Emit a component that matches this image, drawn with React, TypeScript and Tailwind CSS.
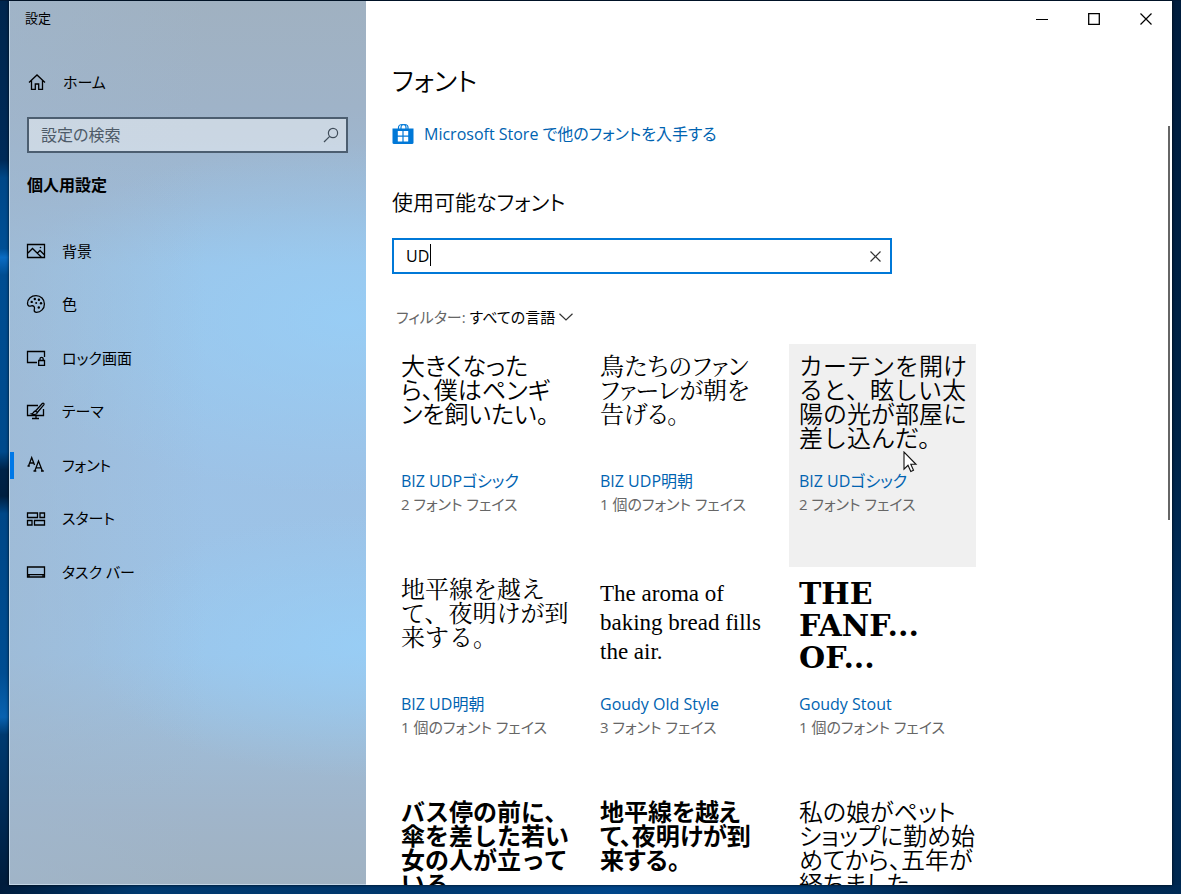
import React, { useState } from "react"
import clsx from "clsx"

interface NavItem {
  label: string
  icon: React.ReactNode
  current?: boolean
}

interface FontEntry {
  name: string
  faces: string
  sample: string
  preview: string
  hovered?: boolean
}

const Icon = ({ children }: { children: React.ReactNode }) => (
  <svg
    width="20"
    height="20"
    viewBox="0 0 20 20"
    fill="none"
    stroke="currentColor"
    strokeWidth="1.3"
    className="shrink-0"
    aria-hidden="true">
    {children}
  </svg>
)

const HomeIcon = () => (
  <Icon>
    <path d="M2 10.500 10 3l8 7.500M4.500 8.500v8.800h3.800V12h3.400v5.300h3.800V8.500" />
  </Icon>
)

const navItems: NavItem[] = [
  {
    label: "背景",
    icon: (
      <Icon>
        <path d="M1.500 3.500h17v13h-17zM2 12l4.500-4.500 9 8.800M11.500 12l2.500-2.500 4.500 4.500" />
        <circle cx="14.500" cy="6.500" r=".8" fill="currentColor" stroke="none" />
      </Icon>
    )
  },
  {
    label: "色",
    icon: (
      <Icon>
        <path d="M1.500 9.500C1.700 4.800 5.300 1.700 10 1.700c4.800 0 8.400 3.500 8.400 8.200 0 4.800-3.500 8.400-7.900 8.400-1.600 0-2.300-.8-2.300-2 0-1.300.7-2 .1-3.400-.5-1.200-1.700-1.300-3-1-1.900.5-3.800.1-3.800-2.400z" />
        <g fill="currentColor" stroke="none">
          <circle cx="5.700" cy="7.900" r="1.200" />
          <circle cx="8.800" cy="5" r="1.200" />
          <circle cx="12.900" cy="5.700" r="1.200" />
          <circle cx="15" cy="9.300" r="1.200" />
          <circle cx="12.800" cy="13.500" r="1.200" />
          <circle cx="10.200" cy="9" r="1" />
        </g>
      </Icon>
    )
  },
  {
    label: "ロック画面",
    icon: (
      <Icon>
        <path d="M11 14.500H1.500v-11h17V9M12.700 12.500h5.800v4.800h-5.800zM14 12.500v-1.700c0-2 3.200-2 3.200 0v1.700" />
      </Icon>
    )
  },
  {
    label: "テーマ",
    icon: (
      <Icon>
        <path d="M12 4.500H1.500v10h16V8M10 14.500v3M6 17.500h7" />
        <path d="M9.500 10 16.300 2.500c1-.9 2.300.3 1.500 1.300L11.300 11.500zM9.500 10c-2.300.2-1.500 2.400-4 3 2 .9 5.600.8 5.800-1.500" />
      </Icon>
    )
  },
  {
    label: "フォント",
    current: true,
    icon: (
      <Icon>
        <path d="m2.500 11 3.200-8.500L8.500 10M3.500 8h4.300M8.800 16l3.700-10 3.900 10M10.200 12.800h4.800M1.500 11h2.300M7.500 16h2.800M15 16h2.800" />
      </Icon>
    )
  },
  {
    label: "スタート",
    icon: (
      <Icon>
        <path d="M1.500 4h10v4.500h-10zM14 4h4.500v4.500H14zM1.500 11.500H6V16H1.500zM8.500 11.500h10V16h-10z" />
      </Icon>
    )
  },
  {
    label: "タスク バー",
    icon: (
      <Icon>
        <path d="M1.500 5h17v10h-17zM2 12.700h16M3 12.500V15M17 12.500V15" />
      </Icon>
    )
  }
]

// fixed pitch samples turn the proportional kana of the page off again
const gothic =
  "text-2xl leading-6 font-['Noto_Sans_CJK_JP',sans-serif] font-[350] [font-feature-settings:normal]"
const gothicP = "text-2xl leading-6 font-['Noto_Sans_CJK_JP',sans-serif] font-[350]"
const gothicBold =
  "text-2xl leading-6 font-['Noto_Sans_CJK_JP',sans-serif] font-bold [font-feature-settings:normal]"
const mincho =
  "text-2xl leading-6 font-['Noto_Serif_CJK_JP','Noto_Sans_CJK_JP',serif] [font-feature-settings:normal]"
const minchoP = "text-2xl leading-6 font-['Noto_Serif_CJK_JP','Noto_Sans_CJK_JP',serif]"

const fonts: FontEntry[] = [
  {
    name: "BIZ UDPゴシック",
    faces: "2 フォント フェイス",
    sample: "大きくなった\nら、僕はペンギ\nンを飼いたい。",
    preview: gothicP
  },
  {
    name: "BIZ UDP明朝",
    faces: "1 個のフォント フェイス",
    sample: "鳥たちのファン\nファーレが朝を\n告げる。",
    preview: minchoP
  },
  {
    name: "BIZ UDゴシック",
    faces: "2 フォント フェイス",
    sample: "カーテンを開け\nると、眩しい太\n陽の光が部屋に\n差し込んだ。",
    preview: gothic,
    hovered: true
  },
  {
    name: "BIZ UD明朝",
    faces: "1 個のフォント フェイス",
    sample: "地平線を越え\nて、夜明けが到\n来する。",
    preview: mincho
  },
  {
    name: "Goudy Old Style",
    faces: "3 フォント フェイス",
    sample: "The aroma of\nbaking bread fills\nthe air.",
    preview: "pt-[3px] text-[23px] leading-[29px] font-['Liberation_Serif',serif]"
  },
  {
    name: "Goudy Stout",
    faces: "1 個のフォント フェイス",
    sample: "THE\nFANF...\nOF...",
    preview: "pt-[2px] text-3xl leading-8 font-black font-['DejaVu_Serif',serif]"
  },
  {
    name: "UD デジタル 教科書体 N-B",
    faces: "1 個のフォント フェイス",
    sample: "バス停の前に、\n傘を差した若い\n女の人が立って\nいる。",
    preview: gothicBold
  },
  {
    name: "UD デジタル 教科書体 NP-B",
    faces: "1 個のフォント フェイス",
    sample: "地平線を越え\nて、夜明けが到\n来する。",
    preview: "text-2xl leading-6 font-['Noto_Sans_CJK_JP',sans-serif] font-bold"
  },
  {
    name: "UD デジタル 教科書体 NK-R",
    faces: "1 個のフォント フェイス",
    sample: "私の娘がペット\nショップに勤め始\nめてから、五年が\n経ちました。",
    preview: gothicP
  }
]

const Pointer = () => (
  <svg
    width="15"
    height="22"
    viewBox="0 0 15 22"
    className="absolute top-[107px] left-[114px]"
    aria-hidden="true">
    <path
      d="M1 1v17.200l4-3.900 2.800 6.200 2.700-1.200-2.700-6H13z"
      fill="#fff"
      stroke="#111"
      strokeWidth="1.100"
    />
  </svg>
)

const FontCard = ({ font }: { font: FontEntry }) => (
  <a
    href="#font"
    className={clsx(
      "relative block h-[223px] pt-[9px] pl-[10px] whitespace-nowrap",
      font.hovered && "bg-[#f0f0f0]"
    )}>
    <p className={clsx("h-[117px] whitespace-pre text-black", font.preview)}>{font.sample}</p>
    <p className="leading-[23px] text-[#0063b1]">{font.name}</p>
    <p className="text-[15px] leading-[22px] text-[#666]">{font.faces}</p>
    {font.hovered && <Pointer />}
  </a>
)

const Sidebar = () => (
  <aside className="flex w-[357px] shrink-0 flex-col border-b border-l border-[#c3d6e6] bg-[linear-gradient(90deg,#a0b6cc90_0%,#a0b6cc00_55%),radial-gradient(ellipse_100%_20%_at_95%_36%,#97d0f9c0_0%,#97d0f900_100%),radial-gradient(ellipse_80%_15%_at_100%_73%,#97d0f9c0_0%,#97d0f900_100%),linear-gradient(180deg,#a0b1c1_0%,#9fb3c8_12%,#9dbad7_23%,#9cc3e6_30%,#9dc2e6_52%,#9cc4e8_74%,#9fbbd5_84%,#a0b5ca_92%,#a0b2c2_100%)]">
    <div className="flex h-9 items-center pl-[15px] text-[13px]">設定</div>
    <a href="#home" className="mt-[25px] flex h-10 items-center gap-4 pl-[17px] text-[15px]">
      <HomeIcon />
      ホーム
    </a>
    <div className="mt-[15px] mr-[18px] ml-[17px] flex h-9 items-center border-2 border-[#4c5e70] bg-white/45 pr-[7px] pl-3">
      <input
        type="text"
        aria-label="設定の検索"
        placeholder="設定の検索"
        className="min-w-0 flex-1 bg-transparent outline-none placeholder:text-[#4e5b68]"
      />
      <svg
        width="16"
        height="16"
        viewBox="0 0 16 16"
        fill="none"
        stroke="#3f4c59"
        strokeWidth="1.200"
        aria-hidden="true">
        <circle cx="10" cy="6" r="4.600" />
        <path d="M6.700 9.300 1 15" />
      </svg>
    </div>
    <h2 className="mt-5 pl-[17px] leading-6 font-bold">個人用設定</h2>
    <nav className="mt-[27px] grid h-[375px] grid-rows-7 text-[15px]">
      {navItems.map((item) => (
        <a
          key={item.label}
          href="#section"
          aria-current={item.current ? "page" : undefined}
          className="flex items-center">
          <span className={clsx("mr-3 h-[27px] w-1", item.current && "bg-[#0078e7]")} />
          {item.icon}
          <span className="ml-4">{item.label}</span>
        </a>
      ))}
    </nav>
  </aside>
)

const TitleBar = () => (
  <div className="flex h-9 shrink-0 justify-end">
    <button type="button" aria-label="最小化" className="flex w-[52px] items-center justify-center">
      <svg width="12" height="12" viewBox="0 0 12 12" stroke="#000">
        <path d="M0 6.500h12" />
      </svg>
    </button>
    <button type="button" aria-label="最大化" className="flex w-[52px] items-center justify-center">
      <svg width="12" height="12" viewBox="0 0 12 12" fill="none" stroke="#000" strokeWidth="1.300">
        <path d="M.7.700h10.600v10.600H.7z" />
      </svg>
    </button>
    <button type="button" aria-label="閉じる" className="flex w-[52px] items-center justify-center">
      <svg width="12" height="12" viewBox="0 0 12 12" stroke="#000" strokeWidth="1.200">
        <path d="m.5.500 11 11M11.500.500l-11 11" />
      </svg>
    </button>
  </div>
)

const StoreIcon = () => (
  <svg width="22" height="22" viewBox="0 0 22 22" aria-hidden="true">
    <path
      d="M6.500 6V4.500C6.500.500 14 .500 14 4.500V6M9 6V4.500c0-4 7-4 7 0V6"
      fill="none"
      stroke="#0078d7"
      strokeWidth="1.200"
    />
    <path
      d="M.5 5.500h21v14a1.500 1.500 0 0 1-1.500 1.500H2A1.500 1.500 0 0 1 .5 19.500z"
      fill="#0078d7"
    />
    <path
      d="M5.800 8h4.600v4.600H5.800zM11.600 8h4.600v4.600h-4.600zM5.800 13.800h4.600v4.600H5.800zM11.600 13.800h4.600v4.600h-4.600z"
      fill="#fff"
    />
  </svg>
)

const FontsPage = () => {
  const [query, setQuery] = useState<string>("UD")

  return (
    <div className="flex min-h-0 flex-1">
      <main className="min-w-0 flex-1 overflow-hidden pl-[26px]">
        <h1 className="mt-6 text-[26px] leading-10 font-[350]">フォント</h1>
        <a href="#store" className="mt-[21px] flex h-6 w-fit items-center gap-[10px] text-[#0063b1]">
          <StoreIcon />
          Microsoft Store で他のフォントを入手する
        </a>
        <h2 className="mt-10 text-[21px] leading-8 font-[350]">使用可能なフォント</h2>

        <div className="relative mt-5 flex h-9 w-[500px] max-w-full items-center border-2 border-[#0078d7] bg-white pr-[9px] pl-3">
          <input
            type="text"
            aria-label="フォントの検索"
            value={query}
            onChange={(e) => setQuery(e.target.value)}
            className="min-w-0 flex-1 outline-none"
          />
          {/* caret */}
          <span className="absolute top-1 left-9 h-[22px] w-px bg-black" />
          <button type="button" aria-label="クリア" onClick={() => setQuery("")}>
            <svg width="11" height="11" viewBox="0 0 11 11" stroke="#333" strokeWidth="1.200">
              <path d="m.5.500 10 10M10.500.500l-10 10" />
            </svg>
          </button>
        </div>

        <button type="button" className="mt-[31px] ml-1 flex h-6 items-center text-[15px]">
          <span className="text-[#666]">フィルター:</span>
          <span className="ml-1">すべての言語</span>
          <svg
            width="14"
            height="8"
            viewBox="0 0 14 8"
            fill="none"
            stroke="#333"
            strokeWidth="1.200"
            className="ml-1">
            <path d="m.5.700 6.500 6.300L13.500.700" />
          </svg>
        </button>

        <div className="mt-[15px] -ml-px grid grid-cols-[repeat(3,187px)] gap-x-3">
          {fonts.map((font) => (
            <FontCard key={font.name} font={font} />
          ))}
        </div>
      </main>
      <div className="w-1 shrink-0 pt-[89px]">
        <div className="h-[394px] w-[2px] bg-[#666]" />
      </div>
    </div>
  )
}

function App() {
  return (
    <div className="flex h-screen flex-col overflow-hidden bg-[#001a38] pt-px font-['Open_Sans','Noto_Sans_CJK_JP',sans-serif] text-base text-black [font-feature-settings:'palt']">
      <div className="flex min-h-0 flex-1">
        <div className="w-[9px] shrink-0 bg-[linear-gradient(180deg,#00264e_0%,#002a58_18%,#004788_20%,#004f95_28%,#0a6cc4_29%,#004d92_31%,#004a8c_51%,#002348_53%,#001f40_56%,#004788_58%,#004d92_76%,#0862b0_81%,#003a70_83%,#002a55_92%,#001c3c_100%)]" />
        <div className="z-10 flex min-w-0 flex-1 shadow-[0_0_3px_rgba(0,0,0,0.8)]">
          <Sidebar />
          <div className="flex min-w-0 flex-1 flex-col bg-white">
            <TitleBar />
            <FontsPage />
          </div>
        </div>
        <div className="w-[9px] shrink-0 bg-[linear-gradient(180deg,#001d3e_0%,#002448_50%,#003060_75%,#002850_100%)]" />
      </div>
      <div className="h-[9px] shrink-0 bg-[linear-gradient(90deg,#001c3c_0%,#003a70_12%,#00376c_35%,#00468a_52%,#003a72_68%,#00244a_82%,#002a54_100%)]" />
    </div>
  )
}

export default App
